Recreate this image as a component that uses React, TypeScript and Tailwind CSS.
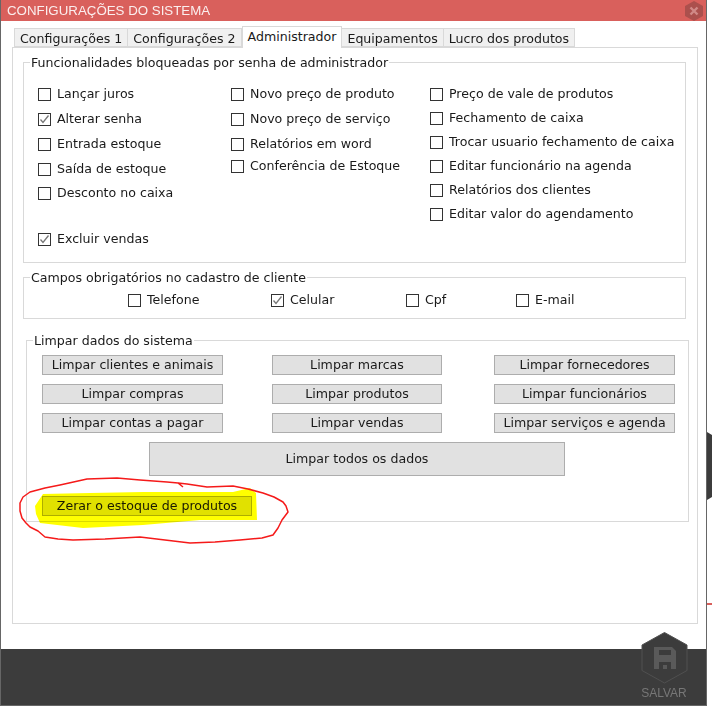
import React from 'react';

const Check: React.FC<{ label: string; checked?: boolean; className?: string }> = ({ label, checked, className = '' }) => (
    <div className={`flex items-center gap-[6px] h-[14px] text-[12.6px] leading-none text-[#1a1a1a] ${className}`}>
        <span className="w-[13px] h-[13px] shrink-0 border border-[#333333] bg-white flex items-center justify-center">
            {checked && (
                <svg width="11" height="11" viewBox="0 0 11 11" fill="none">
                    <path d="M1.5 5.5L4 8.5L9.5 1.5" stroke="#777777" strokeWidth="1.3" />
                </svg>
            )}
        </span>
        <span>{label}</span>
    </div>
);

const ClearButton: React.FC<{ label: string; className?: string }> = ({ label, className = '' }) => (
    <div className={`h-[20px] flex items-center justify-center border border-[#adadad] bg-[#e1e1e1] text-[12.6px] text-[#1a1a1a] ${className}`}>
        {label}
    </div>
);

const Tab: React.FC<{ label: string; active?: boolean }> = ({ label, active }) => (
    <div
        className={
            active
                ? 'h-[22px] -mb-px px-[5px] flex items-center border border-b-0 border-[#d9d9d9] bg-white text-[12.6px] text-[#1a1a1a] z-10'
                : 'h-[19px] px-[5px] pt-[3px] flex items-center border border-l-0 first:border-l border-[#d9d9d9] bg-[#f0f0f0] text-[12.6px] text-[#1a1a1a]'
        }
    >
        {label}
    </div>
);

const Legend: React.FC<{ label: string; className?: string }> = ({ label, className = '' }) => (
    <legend className={`px-[1px] text-[12.6px] leading-[15px] text-[#1a1a1a] ${className}`}>{label}</legend>
);

export default function App() {
    return (
        <div className="relative w-[712px] h-[707px] overflow-hidden bg-white font-['DejaVu_Sans',sans-serif]">
            <div className="w-[707px] h-[706px] flex flex-col border-l border-r border-b border-[#666666] bg-white">
                {/* title bar */}
                <div className="h-[21px] shrink-0 pl-[6px] pt-[1px] flex items-center bg-[#d9605c] text-[#fbeeee] text-[13.3px] font-['Liberation_Sans',sans-serif]">
                    CONFIGURAÇÕES DO SISTEMA
                </div>

                {/* tabs */}
                <div className="flex-1 pl-[11px] pr-[8px] pt-[5px] flex flex-col">
                    <div className="flex items-end pl-[2px]">
                        <Tab label="Configurações 1" />
                        <Tab label="Configurações 2" />
                        <Tab label="Administrador" active />
                        <Tab label="Equipamentos" />
                        <Tab label="Lucro dos produtos" />
                    </div>
                    <div className="h-[577px] border border-[#d9d9d9] pl-[10px] pr-[11px] pt-[7px]">
                        <fieldset className="h-[208px] border border-[#d9d9d9] p-0 m-0">
                            <Legend label="Funcionalidades bloqueadas por senha de administrador" className="ml-[6px]" />
                            <div className="flex pt-[17px] pl-[14px]">
                                <div className="w-[193px] flex flex-col gap-[11px]">
                                    <Check label="Lançar juros" />
                                    <Check label="Alterar senha" checked />
                                    <Check label="Entrada estoque" />
                                    <Check label="Saída de estoque" />
                                    <Check label="Desconto no caixa" className="-mt-px" />
                                    <Check label="Excluir vendas" checked className="mt-[21px]" />
                                </div>
                                <div className="w-[199px] flex flex-col gap-[11px]">
                                    <Check label="Novo preço de produto" />
                                    <Check label="Novo preço de serviço" />
                                    <Check label="Relatórios em word" />
                                    <Check label="Conferência de Estoque" className="-mt-[3px]" />
                                </div>
                                <div className="flex flex-col gap-[10px]">
                                    <Check label="Preço de vale de produtos" />
                                    <Check label="Fechamento de caixa" />
                                    <Check label="Trocar usuario fechamento de caixa" />
                                    <Check label="Editar funcionário na agenda" />
                                    <Check label="Relatórios dos clientes" />
                                    <Check label="Editar valor do agendamento" />
                                </div>
                            </div>
                        </fieldset>

                        <fieldset className="mt-[7px] h-[49px] border border-[#d9d9d9] p-0 m-0">
                            <Legend label="Campos obrigatórios no cadastro de cliente" className="ml-[6px]" />
                            <div className="flex pl-[104px] pt-[8px]">
                                <Check label="Telefone" className="w-[143px]" />
                                <Check label="Celular" checked className="w-[135px]" />
                                <Check label="Cpf" className="w-[110px]" />
                                <Check label="E-mail" />
                            </div>
                        </fieldset>

                        <fieldset className="mt-[14px] ml-[3px] mr-[-3px] h-[189px] border border-[#d9d9d9] pl-[15px] pr-0 pb-0 pt-0 m-0">
                            <Legend label="Limpar dados do sistema" className="-ml-[9px]" />
                            <div className="pt-[7px] grid grid-cols-[230px_222px_181px] gap-y-[9px]">
                                <ClearButton label="Limpar clientes e animais" className="w-[181px]" />
                                <ClearButton label="Limpar marcas" className="w-[170px]" />
                                <ClearButton label="Limpar fornecedores" />
                                <ClearButton label="Limpar compras" className="w-[181px]" />
                                <ClearButton label="Limpar produtos" className="w-[170px]" />
                                <ClearButton label="Limpar funcionários" />
                                <ClearButton label="Limpar contas a pagar" className="w-[181px]" />
                                <ClearButton label="Limpar vendas" className="w-[170px]" />
                                <ClearButton label="Limpar serviços e agenda" />
                            </div>
                            <ClearButton label="Limpar todos os dados" className="mt-[9px] ml-[107px] w-[416px] !h-[34px]" />
                            <ClearButton label="Zerar o estoque de produtos" className="mt-[20px] w-[210px]" />
                        </fieldset>
                    </div>
                </div>

                {/* bottom bar */}
                <div className="h-[56px] shrink-0 bg-[#3c3c3c]" />
            </div>

            {/* yellow highlighter and red marker over the screenshot */}
            <svg className="absolute left-0 top-0 pointer-events-none" width="712" height="707" viewBox="0 0 712 707" fill="none">
                <path
                    d="M43 494L90 493L143 492L233 492L250 488L256 493L257 520L200 520L143 525L83 528L40 523L36 514L35 506Z"
                    fill="#ffff00"
                    className="mix-blend-multiply"
                />
                <path
                    d="M183 487L178 483L167 482L140 480L117 478L87 479L60 485L45 488L30 492L23 497L20 503L20 511L22 518L26 523L30 527L38 531L45 537L58 539L73 540L105 539L140 537L165 540L190 543L215 542L240 540L262 538L273 535L278 528L282 520L288 512L286 506L283 502L274 497L263 493L248 489L233 486L207 487L187 484L178 483"
                    stroke="#f51a1a"
                    strokeWidth="1.5"
                    strokeLinejoin="round"
                />
                {/* the window behind */}
                <path d="M707 432L712 435V497L707 500Z" fill="#3c3c3c" />
                <path d="M707 603H712V605H707Z" fill="#d9605c" />
            </svg>

            {/* close hexagon */}
            <svg className="absolute left-[685px] top-[1px]" width="18" height="20" viewBox="0 0 18 20">
                <path d="M9 0L18 5V15L9 20L0 15V5Z" fill="#ab504d" />
                <path d="M5.5 6.5L12.5 13.5M12.5 6.5L5.5 13.5" stroke="#d08a87" strokeWidth="2.4" />
            </svg>

            {/* save button */}
            <div className="absolute left-[640px] top-[632px] w-[48px] flex flex-col items-center">
                <svg width="47" height="52" viewBox="0 0 47 52">
                    <path d="M23.5 0.5L46 13V38.5L23.5 51L1 38.5V13Z" fill="#3c3c3c" stroke="#505050" strokeWidth="1" />
                    <path d="M13 15H31L35 19V37H13Z" fill="#5a5a5a" />
                    <rect x="18" y="18" width="12" height="5" fill="#3c3c3c" />
                    <path d="M18 30H30V37H18Z" fill="#3c3c3c" />
                    <rect x="22" y="33" width="4" height="4" fill="#5a5a5a" />
                </svg>
                <span className="text-[12px] leading-none mt-[3px] text-[#777777] font-['Liberation_Sans',sans-serif]">SALVAR</span>
            </div>
        </div>
    );
}
